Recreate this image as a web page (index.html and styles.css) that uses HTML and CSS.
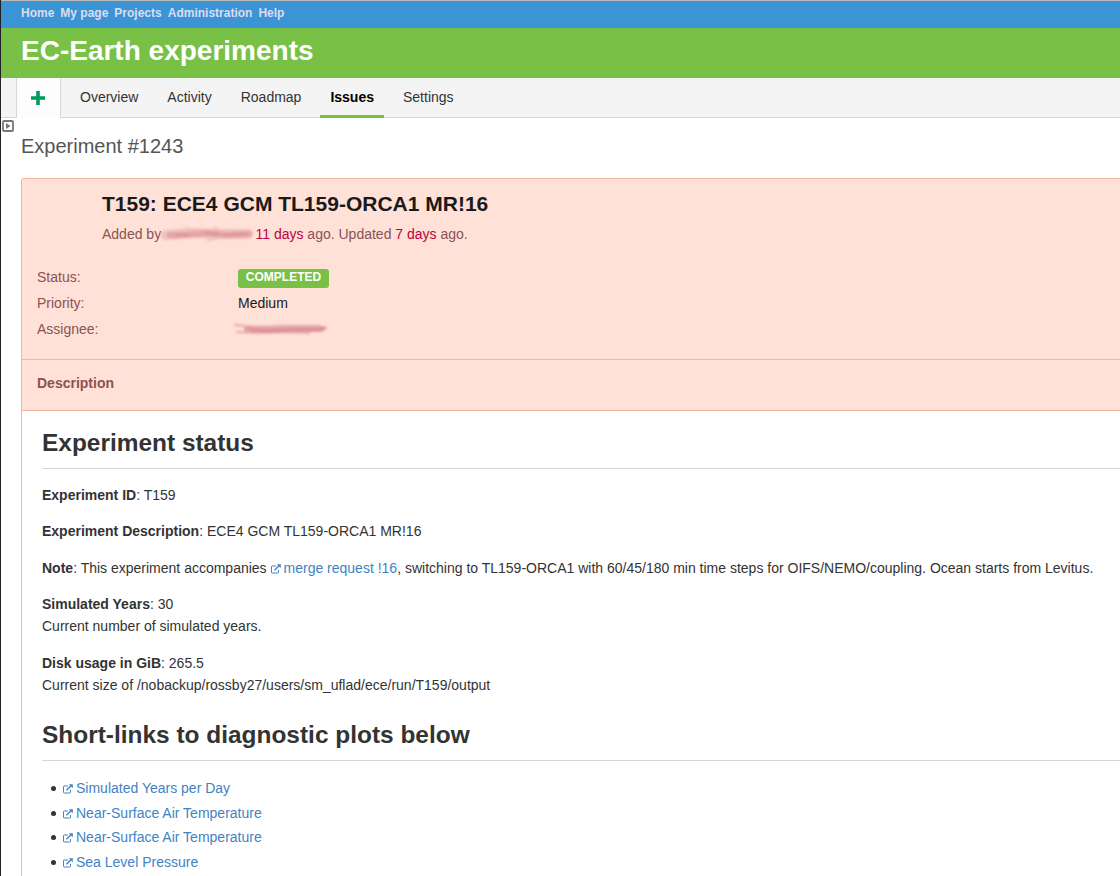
FILE: index.html
```html
<!DOCTYPE html>
<html lang="en">
<head>
  <meta charset="UTF-8">
  <title>Experiment #1243 - EC-Earth experiments</title>
  <link rel="stylesheet" href="styles.css">
</head>
<body>

<!-- Shared icon -->
<svg class="defs" width="0" height="0">
  <symbol id="ext" viewBox="0 0 10 10">
    <path d="M5 2H1.2Q.5 2 .5 2.7V8.3Q.5 9 1.2 9H6.8Q7.5 9 7.5 8.3V6" fill="none" stroke="currentColor"/>
    <path d="M3.5 6.3L8 1.8" fill="none" stroke="currentColor" stroke-width="1.5"/>
    <path d="M5.8 .3H9.8V4.3Z" fill="currentColor"/>
  </symbol>
</svg>

<div class="wrapper">
  <div class="top-menu">
    <a>Home</a>
    <a>My page</a>
    <a>Projects</a>
    <a>Administration</a>
    <a>Help</a>
  </div>

  <div class="header">
    <h1>EC-Earth experiments</h1>
  </div>

  <div class="main-menu">
    <a class="new-object"><svg width="14" height="14" viewBox="0 0 14 14"><path d="M5.2 0h3.6v5.2H14v3.6H8.8V14H5.2V8.800H0V5.200h5.200z"/></svg></a>
    <a>Overview</a>
    <a>Activity</a>
    <a>Roadmap</a>
    <a class="selected">Issues</a>
    <a>Settings</a>
  </div>

  <div class="content">
    <svg class="toggle" width="12" height="12" viewBox="0 0 12 12">
      <rect x="1" y="1" width="10" height="10" rx="1" fill="#fff" stroke="#777" stroke-width="1.8"/>
      <path d="M4 3L8.5 6L4 9Z" fill="#777"/>
    </svg>
    <h2>Experiment #1243</h2>

    <div class="issue">
      <div class="details">
        <div class="subject">
          <h3>T159: ECE4 GCM TL159-ORCA1 MR!16</h3>
          <p class="author">Added by
            <svg class="smudge" width="94" height="18" viewBox="0 0 94 18">
              <g fill="none" stroke-linecap="round">
                <path d="M6 10L30 8L60 9L88 9" stroke="#f1c1bd" stroke-width="10"/>
                <path d="M12 5L25 8M26 3L40 7M55 3L66 7M14 14L30 11M48 15L66 12" stroke="#f1c1bd" stroke-width="2"/>
                <path d="M10 10L24 10L46 8L66 10L89 9" stroke="#e5a5a7" stroke-width="6"/>
                <path d="M16 10L28 10M46 8L58 9M64 10L86 9" stroke="#df999e" stroke-width="3"/>
              </g>
            </svg>
            <a>11 days</a> ago. Updated <a>7 days</a> ago.</p>
        </div>
        <div class="attributes">
          <div class="label">Status:</div>
          <div class="value"><span class="badge">COMPLETED</span></div>
          <div class="label">Priority:</div>
          <div class="value">Medium</div>
          <div class="label">Assignee:</div>
          <div class="value">
            <svg class="smudge assignee" width="100" height="14" viewBox="0 0 100 14">
              <g fill="none" stroke-linecap="round">
                <path d="M4 3L24 5L50 4L88 4" stroke="#efbcb9" stroke-width="3"/>
                <path d="M6 10L28 11L50 10L78 11" stroke="#ecb4b3" stroke-width="2.500"/>
                <path d="M16 7L36 8L60 7L90 7" stroke="#e3a0a5" stroke-width="6"/>
                <path d="M20 8L36 9L60 8L82 8L94 6" stroke="#dc9099" stroke-width="3"/>
              </g>
            </svg>
          </div>
        </div>
        <div class="description">Description</div>
      </div>

      <div class="wiki">
        <h1>Experiment status</h1>
        <p><strong>Experiment ID</strong>: T159</p>
        <p><strong>Experiment Description</strong>: ECE4 GCM TL159-ORCA1 MR!16</p>
        <p><strong>Note</strong>: This experiment accompanies <a class="external"><svg><use href="#ext"/></svg>merge request !16</a>, switching to TL159-ORCA1 with 60/45/180 min time steps for OIFS/NEMO/coupling. Ocean starts from Levitus.</p>
        <p><strong>Simulated Years</strong>: 30<br>Current number of simulated years.</p>
        <p><strong>Disk usage in GiB</strong>: 265.5<br>Current size of /nobackup/rossby27/users/sm_uflad/ece/run/T159/output</p>
        <h1>Short-links to diagnostic plots below</h1>
        <ul>
          <li><a class="external"><svg><use href="#ext"/></svg>Simulated Years per Day</a></li>
          <li><a class="external"><svg><use href="#ext"/></svg>Near-Surface Air Temperature</a></li>
          <li><a class="external"><svg><use href="#ext"/></svg>Near-Surface Air Temperature</a></li>
          <li><a class="external"><svg><use href="#ext"/></svg>Sea Level Pressure</a></li>
        </ul>
      </div>
    </div>
  </div>
</div>

</body>
</html>
```
FILE: styles.css
```css
* {
  box-sizing: border-box;
}

body {
  margin: 0;
  font-family: "Liberation Sans", Arial, sans-serif;
  font-size: 14px;
  color: #333;
  background: #fff;
}

h1, h2, h3, p {
  margin: 0;
}

.defs {
  display: none;
}

.wrapper {
  height: 876px;
  overflow: hidden;
  border-left: 1px solid #222226;
}

/* Header */
.top-menu {
  display: flex;
  gap: 6px;
  height: 28px;
  padding-left: 20px;
  border-top: 1px solid #b9b9b9;
  background: #3b94d3;
  color: #dbdcf3;
  font-size: 12px;
  font-weight: bold;
  line-height: 24px;
}

.header {
  height: 50px;
  padding-left: 20px;
  background: #78c146;
}

.header h1 {
  color: #fff;
  font-size: 28px;
  line-height: 45px;
}

.main-menu {
  display: flex;
  height: 40px;
  padding-left: 15px;
  background: #f4f4f4;
  border-bottom: 1px solid #d7d7d7;
}

.main-menu a {
  height: 40px;
  padding: 0 10px;
  margin-right: 9px;
  line-height: 38px;
}

.main-menu .new-object {
  width: 45px;
  padding: 13px 0 0 14px;
  background: #fdfdfd;
  border: 1px solid #d7d7d7;
  border-width: 0 1px;
  line-height: 0;
}

.new-object path {
  fill: #009a5b;
}

.main-menu .selected {
  color: #000;
  font-weight: bold;
  border-bottom: 3px solid #78c146;
}

/* Issue */
.content {
  position: relative;
  padding: 16px 0 0 20px;
}

.toggle {
  position: absolute;
  left: 1px;
  top: 2px;
}

.content h2 {
  color: #555;
  font-size: 20px;
  font-weight: normal;
  line-height: 24px;
}

.issue {
  margin-top: 20px;
  border: 1px solid #f2b4a1;
  border-right: 0;
  border-radius: 3px 0 0 0;
}

.details {
  background: #ffe1d7;
  color: #8b5353;
  border-bottom: 1px solid #f2b4a1;
}

.subject {
  height: 85px;
  padding: 11px 0 0 80px;
}

.subject h3 {
  color: #1a1a1a;
  font-size: 21px;
  line-height: 28px;
}

.author {
  margin-top: 6px;
  line-height: 20px;
}

.author a {
  color: #c00040;
}

.smudge {
  filter: blur(1px);
  margin: -2px -2.5px -4px -5px;
  vertical-align: baseline;
}

.attributes {
  display: grid;
  grid-template-columns: 201px 1fr;
  grid-auto-rows: 26px;
  height: 95px;
  padding-left: 15px;
  line-height: 26px;
}

.value {
  color: #1a1a1a;
}

.badge {
  display: block;
  width: 91px;
  height: 19px;
  margin-top: 5px;
  background: #78c146;
  border-radius: 3px;
  color: #fff;
  font-size: 12px;
  font-weight: bold;
  line-height: 17px;
  text-align: center;
}

.assignee {
  display: block;
  margin: 6px 0 0 -7px;
}

.description {
  height: 51px;
  padding-left: 15px;
  border-top: 1px solid #f2b4a1;
  font-weight: bold;
  line-height: 46px;
}

/* Description text */
.wiki {
  padding: 15px 0 20px 20px;
  line-height: 22.4px;
}

.wiki h1 {
  height: 43px;
  margin-bottom: 14.8px;
  border-bottom: 1px solid #d7d7d7;
  font-size: 24.45px;
  line-height: 34px;
}

.wiki p {
  margin-bottom: 14px;
  white-space: nowrap;
}

.wiki p + h1 {
  margin-top: 21px;
}

.external {
  color: #4183c4;
}

.external svg {
  width: 10px;
  height: 10px;
  margin: 0 3px -1px 0;
}

.wiki ul {
  margin: 16.4px 0 0;
  padding-left: 21px;
  list-style: none;
}

.wiki li {
  margin-bottom: 2.2px;
}

.wiki li::before {
  content: "";
  display: inline-block;
  width: 5px;
  height: 5px;
  margin: 0 7px 2px -12px;
  border-radius: 50%;
  background: #333;
}
```
